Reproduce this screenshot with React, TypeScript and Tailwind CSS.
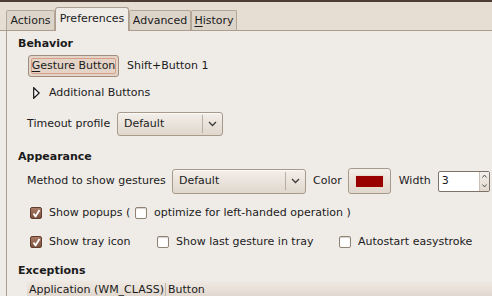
import React from 'react';

function Chevron() {
  return (
    <svg width="9" height="6" viewBox="0 0 9 6" className="shrink-0">
      <polyline points="1,1 4.5,4.5 8,1" fill="none" stroke="#3a3a3a" strokeWidth="1.3" />
    </svg>
  );
}

function Combo({ text, width }: { text: string; width: string }) {
  return (
    <div
      className={`${width} h-full flex items-center rounded-[3px] border border-[#a89a8b] bg-gradient-to-b from-[#f3efea] to-[#e0d7cd] shadow-[inset_0_1px_0_#fbf9f7]`}
    >
      <span className="flex-1 pl-[6px]">{text}</span>
      <span className="w-px h-[18px] bg-[#b9ad9f]" />
      <span className="w-[19px] flex justify-center">
        <Chevron />
      </span>
    </div>
  );
}

function Check({ checked }: { checked?: boolean }) {
  if (checked) {
    return (
      <span className="w-[12px] h-[12px] shrink-0 rounded-[2px] border border-[#5f3d2f] bg-gradient-to-b from-[#a97a63] to-[#7e513f] flex items-center justify-center">
        <svg width="9" height="9" viewBox="0 0 9 9">
          <polyline points="1.5,4.5 3.5,7.5 7.5,1" fill="none" stroke="#ffffff" strokeWidth="1.8" strokeLinejoin="round" />
        </svg>
      </span>
    );
  }
  return <span className="block w-[12px] h-[12px] shrink-0 rounded-[2px] border border-[#8e8275] bg-white shadow-[inset_0_1px_1px_#d8d2cc]" />;
}

function Tab({ label, width, active, mnemonic }: { label: string; width: string; active?: boolean; mnemonic?: boolean }) {
  const first = label.charAt(0);
  const rest = label.slice(1);
  if (active) {
    return (
      <div className={`${width} h-[24px] -mb-px flex items-center justify-center rounded-t-[3px] border border-b-0 border-[#ac9d8e] bg-[#efebe7]`}>
        <span className="-mt-[2px]">{label}</span>
      </div>
    );
  }
  return (
    <div className={`${width} h-[20px] flex items-center justify-center rounded-t-[2px] border border-b-0 border-[#b5a798] bg-[#ddd4c9]`}>
      <span>
        {mnemonic ? <span className="underline underline-offset-2">{first}</span> : first}
        {rest}
      </span>
    </div>
  );
}

export default function App() {
  return (
    <div className="w-[492px] h-[296px] overflow-hidden flex flex-col bg-[#efebe7] text-[11px] leading-[14px] text-[#1b1b1b] whitespace-nowrap font-['DejaVu_Sans',sans-serif]">
      <div className="h-[2px] shrink-0 bg-[#4e3d35]" />
      <div className="h-[29px] shrink-0 flex items-end pl-[6px] bg-[#e6ddd3] border-b border-[#ac9d8e]">
        <Tab label="Actions" width="w-[49px]" />
        <Tab label="Preferences" width="w-[74px]" active />
        <Tab label="Advanced" width="w-[62px]" />
        <Tab label="History" width="w-[46px]" mnemonic />
      </div>

      <div className="flex-1 ml-[6px] border-l border-[#ac9d8e] pl-[11px] flex flex-col">
        <div className="mt-[6px] h-[14px] font-bold">Behavior</div>

        <div className="mt-[4px] h-[22px] ml-[10px] flex items-center">
          <div className="h-full w-[91px] rounded-[3px] border border-[#a08f80] bg-[#e4d4c8] p-[2px]">
            <div className="h-full rounded-[2px] border border-[#d99e86] flex items-center justify-center">
              <span>
                <span className="underline underline-offset-2">G</span>esture Button
              </span>
            </div>
          </div>
          <span className="ml-[8px]">Shift+Button 1</span>
        </div>

        <div className="mt-[9px] h-[14px] ml-[15px] flex items-center">
          <svg width="7" height="12" viewBox="0 0 7 12" className="shrink-0">
            <polygon points="0.7,0.7 6.2,6 0.7,11.3" fill="#ffffff" stroke="#111111" strokeWidth="1.2" />
          </svg>
          <span className="ml-[9px]">Additional Buttons</span>
        </div>

        <div className="mt-[12px] h-[24px] ml-[9px] flex items-center">
          <span className="w-[90px]">Timeout profile</span>
          <Combo text="Default" width="w-[106px]" />
        </div>

        <div className="mt-[14px] h-[14px] font-bold">Appearance</div>

        <div className="mt-[4px] h-[26px] ml-[9px] flex items-center">
          <span className="w-[145px]">Method to show gestures</span>
          <div className="h-[25px]">
            <Combo text="Default" width="w-[134px]" />
          </div>
          <span className="ml-[7px]">Color</span>
          <div className="ml-[6px] w-[43px] h-[26px] rounded-[3px] border border-[#a89a8b] bg-gradient-to-b from-[#f3efea] to-[#e0d7cd] flex items-center justify-center">
            <span className="w-[29px] h-[13px] bg-[#990000] border border-[#e8dcd0]" />
          </div>
          <span className="ml-[8px]">Width</span>
          <div className="ml-[7px] w-[52px] h-[21px] flex border border-[#7d7268] bg-white rounded-[2px]">
            <span className="flex-1 pl-[3px] flex items-center">3</span>
            <span className="w-[10px] flex flex-col border-l border-[#c9bfb4] bg-gradient-to-b from-[#f3efea] to-[#e2d9cf]">
              <span className="flex-1 flex items-center justify-center">
                <svg width="5" height="4" viewBox="0 0 5 4"><polyline points="0.5,3.5 2.5,1 4.5,3.5" fill="none" stroke="#555" strokeWidth="1" /></svg>
              </span>
              <span className="flex-1 flex items-center justify-center">
                <svg width="5" height="4" viewBox="0 0 5 4"><polyline points="0.5,0.5 2.5,3 4.5,0.5" fill="none" stroke="#555" strokeWidth="1" /></svg>
              </span>
            </span>
          </div>
        </div>

        <div className="mt-[12px] h-[14px] ml-[12px] flex items-center">
          <Check checked />
          <span className="ml-[7px] w-[86px]">Show popups (</span>
          <Check />
          <span className="ml-[7px]">optimize for left-handed operation )</span>
        </div>

        <div className="mt-[15px] h-[14px] ml-[12px] flex items-center">
          <Check checked />
          <span className="ml-[7px] w-[108px]">Show tray icon</span>
          <Check />
          <span className="ml-[7px] w-[163px]">Show last gesture in tray</span>
          <Check />
          <span className="ml-[7px]">Autostart easystroke</span>
        </div>

        <div className="mt-[15px] h-[14px] font-bold">Exceptions</div>

        <div className="mt-[3px] h-[18px] ml-[9px] flex items-center bg-gradient-to-b from-[#efe9e3] via-[#e8e0d8] to-[#dcd3c9]">
          <span className="w-[139px] pl-[2px] border-r border-[#c2b6a9]">Application (WM_CLASS)</span>
          <span className="pl-[2px]">Button</span>
        </div>
      </div>
    </div>
  );
}
